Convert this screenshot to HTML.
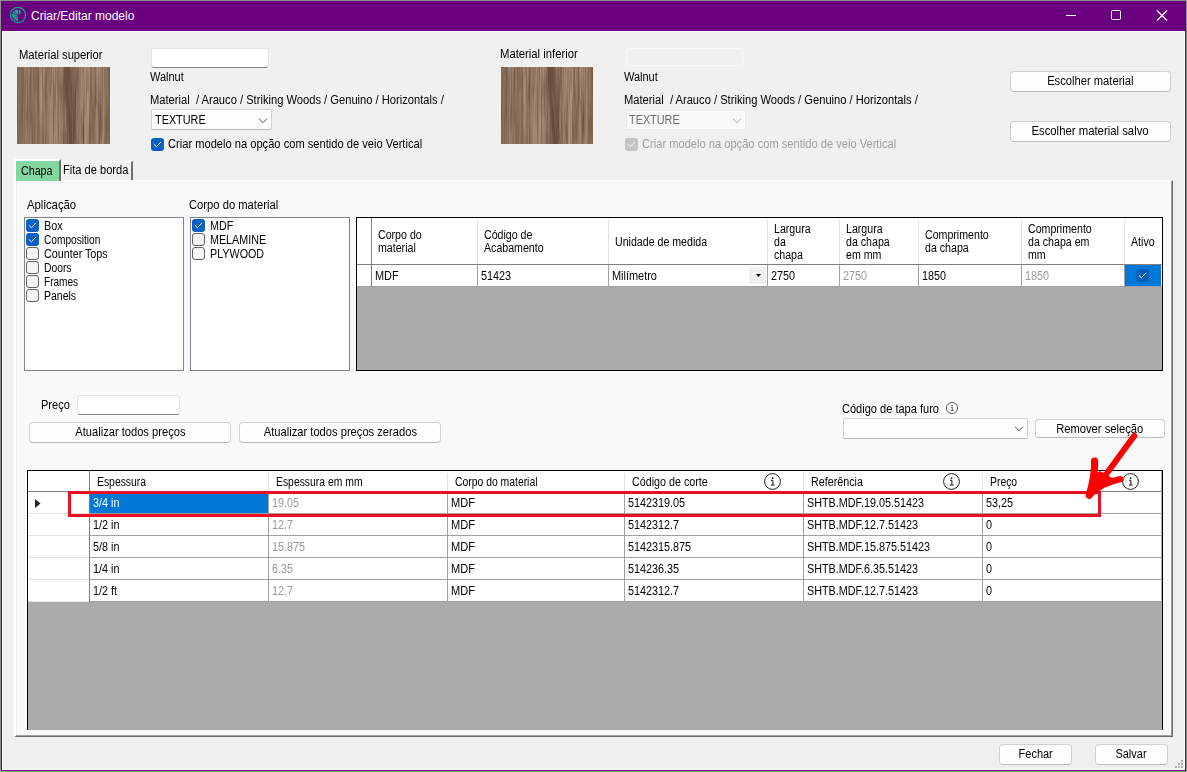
<!DOCTYPE html>
<html><head><meta charset="utf-8"><title>Criar/Editar modelo</title>
<style>
*{box-sizing:border-box;margin:0;padding:0}
html,body{width:1187px;height:772px;overflow:hidden;background:#8d908d}
body{font-family:"Liberation Sans",sans-serif;font-size:12px;color:#000;position:relative;line-height:13px}
.a{position:absolute;white-space:pre}
.t{position:absolute;white-space:pre;transform-origin:0 0;font-size:12px;line-height:13px}
.ts{display:inline-block;white-space:pre;transform-origin:50% 50%}
#win{position:absolute;left:1px;top:1px;width:1185px;height:770px;background:#6a0080}
#client{position:absolute;left:2px;top:31px;width:1183px;height:739px;background:#f0f0f0;border:1px solid #fcfcfc}
#title{position:absolute;left:30px;top:8px;color:#fff;font-size:12px;line-height:14px;white-space:pre}
.btn{position:absolute;background:#fdfdfd;border:1px solid #d0d0d0;border-bottom-color:#bcbcbc;border-radius:4px;text-align:center;white-space:pre}
.inp{position:absolute;background:#fff;border:1px solid #e3e3e3;border-bottom:1px solid #868686;border-radius:3px}
.cmb{position:absolute;background:#fdfdfd;border:1px solid #d2d2d2;border-bottom-color:#b8b8b8;border-radius:2px}
.cb{position:absolute;width:13px;height:13px;border-radius:3px}
.cb.on{background:#0a5fc2}
.cb.off{background:#f4f4f4;border:1px solid #626262}
.cb.dis{background:#c4c4c4}
.cb svg{position:absolute;left:0;top:0}
.wood{position:absolute;width:93px;height:77px}
.lb{position:absolute;background:#fff;border:1px solid #7f848c}
.grid{position:absolute;background:#ababab;border:1px solid #000;overflow:hidden}
</style></head><body>
<div id="win">
 <svg class="a" style="left:8px;top:5px" width="19" height="19" viewBox="0 0 19 19"><g transform="translate(0.5,0.5)"><circle cx="8.5" cy="8.5" r="7.6" fill="none" stroke="#16a890" stroke-width="1.25"/><path d="M8.5 9 L8.3 3 A6 6 0 0 0 3.2 11.5 Z M8.5 9 L3.6 12 A6 6 0 0 0 8.6 14.6 Z M9.3 8.3 L9.3 3.2 L11.5 4.2 L11 5.6 L12.3 6.6 L10.6 7 Z" fill="#12b090"/><path d="M8.5 9 L3 6.8 M8.5 9 L4 4.2 M8.5 9 L5.6 13.8" stroke="#6a0080" stroke-width="0.6"/></g></svg>
 <div id="title">Criar/Editar modelo</div>
 <svg class="a" style="left:1064px;top:9px" width="110" height="14" viewBox="0 0 110 14"><path d="M1 5.5H11" stroke="#fff" stroke-width="1" fill="none"/><rect x="46.5" y="0.5" width="9" height="9" rx="1" fill="none" stroke="#fff" stroke-width="1"/><path d="M92 0.5L102 10.5M102 0.5L92 10.5" stroke="#fff" stroke-width="1.2" fill="none"/></svg>
</div>
<div id="client"></div>
<div id="ui" class="a" style="left:0;top:0;width:1187px;height:772px">
<svg width="0" height="0" style="position:absolute"><defs>
<linearGradient id="wg" x1="0" x2="1" y1="0" y2="0"><stop offset="0" stop-color="#8e7461"/><stop offset="0.04" stop-color="#846b59"/><stop offset="0.09" stop-color="#9b816c"/><stop offset="0.14" stop-color="#a88f78"/><stop offset="0.18" stop-color="#8c7360"/><stop offset="0.23" stop-color="#917864"/><stop offset="0.27" stop-color="#ac937b"/><stop offset="0.31" stop-color="#947b67"/><stop offset="0.36" stop-color="#9e8570"/><stop offset="0.42" stop-color="#a78e77"/><stop offset="0.49" stop-color="#a08771"/><stop offset="0.53" stop-color="#705747"/><stop offset="0.57" stop-color="#765d4c"/><stop offset="0.62" stop-color="#8f7663"/><stop offset="0.68" stop-color="#99806c"/><stop offset="0.74" stop-color="#b1987f"/><stop offset="0.8" stop-color="#a48b74"/><stop offset="0.84" stop-color="#947b68"/><stop offset="0.88" stop-color="#ac937b"/><stop offset="0.93" stop-color="#9e8570"/><stop offset="0.97" stop-color="#866d5b"/><stop offset="1" stop-color="#8c7361"/></linearGradient>
<filter id="gr1" x="0" y="0" width="100%" height="100%" color-interpolation-filters="sRGB"><feTurbulence type="fractalNoise" baseFrequency="0.45 0.008" numOctaves="3" seed="11"/><feColorMatrix type="matrix" values="0 0 0 0 0.31  0 0 0 0 0.22  0 0 0 0 0.15  1.15 0 0 0 -0.44"/></filter>
<filter id="gr2" x="0" y="0" width="100%" height="100%" color-interpolation-filters="sRGB"><feTurbulence type="fractalNoise" baseFrequency="0.38 0.007" numOctaves="2" seed="4"/><feColorMatrix type="matrix" values="0 0 0 0 0.80  0 0 0 0 0.68  0 0 0 0 0.54  0.95 0 0 0 -0.43"/></filter>
<filter id="gr3" x="0" y="0" width="100%" height="100%" color-interpolation-filters="sRGB"><feTurbulence type="fractalNoise" baseFrequency="0.6 0.025" numOctaves="2" seed="23"/><feColorMatrix type="matrix" values="0 0 0 0 0.27  0 0 0 0 0.19  0 0 0 0 0.12  1.0 0 0 0 -0.47"/></filter>
<symbol id="wood" viewBox="0 0 93 77" preserveAspectRatio="none"><rect width="93" height="77" fill="url(#wg)"/>
<rect width="93" height="77" filter="url(#gr2)"/>
<rect width="93" height="77" filter="url(#gr1)"/><rect width="93" height="77" filter="url(#gr3)"/>
<path d="M48 0 C49 20 51 40 54 77" stroke="#5a402d" stroke-width="3" fill="none" opacity=".42"/>
<path d="M52 0 C53 25 57 50 60 77" stroke="#654a35" stroke-width="1.3" fill="none" opacity=".4"/>
<path d="M76 77 C75 55 76 40 79 31 C82 40 83 55 82 77" stroke="#765a43" stroke-width="1.1" fill="none" opacity=".6"/>
</symbol>
<symbol id="chk" viewBox="0 0 13 13"><path d="M3.1 6.5L5.3 8.7L9.8 4.2" stroke="#fff" stroke-width="0.95" fill="none" stroke-linecap="round" stroke-linejoin="round"/></symbol>
<symbol id="chev" viewBox="0 0 10 6"><path d="M1.3 1L5 4.7L8.7 1" stroke="#555" stroke-width="1" fill="none" stroke-linecap="round" stroke-linejoin="round"/></symbol>
<symbol id="info" viewBox="0 0 17 17"><circle cx="8.5" cy="8.5" r="7.9" fill="#fff" stroke="#1c1c1c" stroke-width="1"/><path d="M7 7.3H8.9V11.9M6.8 12H10.6" stroke="#111" stroke-width="1" fill="none"/><circle cx="8.6" cy="5.2" r="0.85" fill="#111"/></symbol>
</defs></svg>
<div class="t" style="left:19px;top:49px;transform:scaleX(0.935)">Material superior</div>
<svg class="wood" style="left:17px;top:67px"><use href="#wood"/></svg>
<div class="inp" style="left:151px;top:48px;width:118px;height:20px"></div>
<div class="t" style="left:150px;top:71px;transform:scaleX(0.915)">Walnut</div>
<div class="t" style="left:150px;top:94px;transform:scaleX(0.93)">Material  / Arauco / Striking Woods / Genuino / Horizontals /</div>
<div class="cmb" style="left:151px;top:109px;width:121px;height:21px"><svg class="a" style="left:106px;top:8px" width="10" height="6"><use href="#chev"/></svg></div>
<div class="t" style="left:155px;top:114px;transform:scaleX(0.905)">TEXTURE</div>
<div class="cb on" style="left:151px;top:138px"><svg width="13" height="13"><use href="#chk"/></svg></div>
<div class="t" style="left:168px;top:138px;transform:scaleX(0.927)">Criar modelo na opção com sentido de veio Vertical</div>
<div class="t" style="left:500px;top:48px;transform:scaleX(0.94)">Material inferior</div>
<svg class="wood" style="left:501px;top:67px;width:92px"><use href="#wood"/></svg>
<div class="a" style="left:626px;top:48px;width:117px;height:18px;border:1px solid #f8f8f8;background:#f0f0f0;border-radius:3px"></div>
<div class="t" style="left:624px;top:71px;transform:scaleX(0.915)">Walnut</div>
<div class="t" style="left:624px;top:94px;transform:scaleX(0.93)">Material  / Arauco / Striking Woods / Genuino / Horizontals /</div>
<div class="cmb" style="left:626px;top:110px;width:120px;height:20px;background:#f8f8f8;border-color:#eaeaea"><svg class="a" style="left:105px;top:7px;opacity:.5" width="10" height="6"><use href="#chev"/></svg></div>
<div class="t" style="left:629px;top:114px;transform:scaleX(0.905);color:#6d6d6d">TEXTURE</div>
<div class="cb dis" style="left:625px;top:138px"><svg width="13" height="13"><use href="#chk"/></svg></div>
<div class="t" style="left:642px;top:138px;transform:scaleX(0.927);color:#a0a0a0">Criar modelo na opção com sentido de veio Vertical</div>
<div class="btn" style="left:1010px;top:71px;width:161px;height:21px;line-height:18px"><span class="ts" style="transform:scaleX(0.932)">Escolher material</span></div>
<div class="btn" style="left:1010px;top:121px;width:161px;height:21px;line-height:18px"><span class="ts" style="transform:scaleX(0.945)">Escolher material salvo</span></div>
<div class="a" style="left:14px;top:180px;width:1159px;height:557px;background:#f9f9f9;border-left:2px solid #fff;border-top:1px solid #fff;border-right:1px solid #696969;border-bottom:1px solid #696969"></div>
<div class="a" style="left:16px;top:181px;width:1px;height:554px;background:#ececec"></div>
<div class="a" style="left:1171px;top:181px;width:1px;height:555px;background:#a0a0a0"></div>
<div class="a" style="left:16px;top:735px;width:1156px;height:1px;background:#a0a0a0"></div>
<div class="a" style="left:14px;top:159px;width:47px;height:22px;background:#84d7a0;border-left:2px solid #fff;border-top:2px solid #fff;border-right:2px solid #6e6e6e"></div>
<div class="t" style="left:21px;top:165px;transform:scaleX(0.89)">Chapa</div>
<div class="a" style="left:61px;top:161px;width:72px;height:19px;background:#f0f0f0;border-top:1px solid #fff;border-right:2px solid #6e6e6e"></div>
<div class="t" style="left:63px;top:164px;transform:scaleX(0.925)">Fita de borda</div>
<div class="t" style="left:27px;top:199px;transform:scaleX(0.945)">Aplicação</div>
<div class="t" style="left:188.5px;top:199px;transform:scaleX(0.935)">Corpo do material</div>
<div class="lb" style="left:24px;top:217px;width:160px;height:154px"></div>
<div class="cb on" style="left:26px;top:219px"><svg width="13" height="13"><use href="#chk"/></svg></div>
<div class="t" style="left:43.6px;top:220px;transform:scaleX(0.9)">Box</div>
<div class="cb on" style="left:26px;top:233px"><svg width="13" height="13"><use href="#chk"/></svg></div>
<div class="t" style="left:43.6px;top:234px;transform:scaleX(0.845)">Composition</div>
<div class="cb off" style="left:26px;top:247px"></div>
<div class="t" style="left:43.6px;top:248px;transform:scaleX(0.895)">Counter Tops</div>
<div class="cb off" style="left:26px;top:261px"></div>
<div class="t" style="left:43.6px;top:262px;transform:scaleX(0.86)">Doors</div>
<div class="cb off" style="left:26px;top:275px"></div>
<div class="t" style="left:43.6px;top:276px;transform:scaleX(0.84)">Frames</div>
<div class="cb off" style="left:26px;top:289px"></div>
<div class="t" style="left:43.6px;top:290px;transform:scaleX(0.875)">Panels</div>
<div class="lb" style="left:190px;top:217px;width:160px;height:154px"></div>
<div class="cb on" style="left:192px;top:219px"><svg width="13" height="13"><use href="#chk"/></svg></div>
<div class="t" style="left:210px;top:220px;transform:scaleX(0.895)">MDF</div>
<div class="cb off" style="left:192px;top:233px"></div>
<div class="t" style="left:210px;top:234px;transform:scaleX(0.895)">MELAMINE</div>
<div class="cb off" style="left:192px;top:247px"></div>
<div class="t" style="left:210px;top:248px;transform:scaleX(0.895)">PLYWOOD</div>
<div class="grid" style="left:356px;top:217px;width:807px;height:154px">
<div class="a" style="left:0;top:0;width:805px;height:47px;background:#fff;border-bottom:1px solid #808080"></div>
<div class="a" style="left:0;top:47px;width:805px;height:22px;background:#fff;border-bottom:1px solid #a0a0a0"></div>
<div class="a" style="left:14px;top:0px;width:1px;height:46px;background:#808080"></div>
<div class="a" style="left:14px;top:47px;width:1px;height:22px;background:#808080"></div>
<div class="t" style="left:21.3px;top:11px;transform:scaleX(0.885)">Corpo do</div>
<div class="t" style="left:21.3px;top:24px;transform:scaleX(0.885)">material</div>
<div class="a" style="left:120px;top:2px;width:1px;height:44px;background:#e2e2e2"></div>
<div class="a" style="left:120px;top:47px;width:1px;height:22px;background:#a0a0a0"></div>
<div class="t" style="left:18px;top:52px;transform:scaleX(0.91)">MDF</div>
<div class="t" style="left:127.3px;top:11px;transform:scaleX(0.885)">Código de</div>
<div class="t" style="left:127.3px;top:24px;transform:scaleX(0.885)">Acabamento</div>
<div class="a" style="left:251px;top:2px;width:1px;height:44px;background:#e2e2e2"></div>
<div class="a" style="left:251px;top:47px;width:1px;height:22px;background:#a0a0a0"></div>
<div class="t" style="left:124px;top:52px;transform:scaleX(0.9)">51423</div>
<div class="t" style="left:258.3px;top:18px;transform:scaleX(0.885)">Unidade de medida</div>
<div class="a" style="left:410px;top:2px;width:1px;height:44px;background:#e2e2e2"></div>
<div class="a" style="left:410px;top:47px;width:1px;height:22px;background:#a0a0a0"></div>
<div class="t" style="left:255px;top:52px;transform:scaleX(0.91)">Milímetro</div>
<div class="t" style="left:417.3px;top:5px;transform:scaleX(0.885)">Largura</div>
<div class="t" style="left:417.3px;top:18px;transform:scaleX(0.885)">da</div>
<div class="t" style="left:417.3px;top:31px;transform:scaleX(0.885)">chapa</div>
<div class="a" style="left:482px;top:2px;width:1px;height:44px;background:#e2e2e2"></div>
<div class="a" style="left:482px;top:47px;width:1px;height:22px;background:#a0a0a0"></div>
<div class="t" style="left:414px;top:52px;transform:scaleX(0.9)">2750</div>
<div class="t" style="left:489.3px;top:5px;transform:scaleX(0.885)">Largura</div>
<div class="t" style="left:489.3px;top:18px;transform:scaleX(0.885)">da chapa</div>
<div class="t" style="left:489.3px;top:31px;transform:scaleX(0.885)">em mm</div>
<div class="a" style="left:561px;top:2px;width:1px;height:44px;background:#e2e2e2"></div>
<div class="a" style="left:561px;top:47px;width:1px;height:22px;background:#a0a0a0"></div>
<div class="t" style="left:486px;top:52px;transform:scaleX(0.9);color:#9a9a9a">2750</div>
<div class="t" style="left:568.3px;top:11px;transform:scaleX(0.885)">Comprimento</div>
<div class="t" style="left:568.3px;top:24px;transform:scaleX(0.885)">da chapa</div>
<div class="a" style="left:664px;top:2px;width:1px;height:44px;background:#e2e2e2"></div>
<div class="a" style="left:664px;top:47px;width:1px;height:22px;background:#a0a0a0"></div>
<div class="t" style="left:565px;top:52px;transform:scaleX(0.9)">1850</div>
<div class="t" style="left:671.3px;top:5px;transform:scaleX(0.885)">Comprimento</div>
<div class="t" style="left:671.3px;top:18px;transform:scaleX(0.885)">da chapa em</div>
<div class="t" style="left:671.3px;top:31px;transform:scaleX(0.885)">mm</div>
<div class="a" style="left:767px;top:2px;width:1px;height:44px;background:#e2e2e2"></div>
<div class="a" style="left:767px;top:47px;width:1px;height:22px;background:#a0a0a0"></div>
<div class="t" style="left:668px;top:52px;transform:scaleX(0.9);color:#9a9a9a">1850</div>
<div class="t" style="left:774.3px;top:18px;transform:scaleX(0.885)">Ativo</div>
<div class="a" style="left:392px;top:49px;width:17px;height:17px;background:#f0f0f0"></div>
<svg class="a" style="left:399px;top:56px" width="5" height="3"><path d="M0 0H5L2.5 3Z" fill="#000"/></svg>
<div class="a" style="left:768px;top:47px;width:36px;height:21px;background:#0078d7"></div>
<div class="cb" style="left:779px;top:51px;background:#005fb8"><svg width="13" height="13"><use href="#chk"/></svg></div>
</div>
<div class="t" style="left:41px;top:399px;transform:scaleX(0.918)">Preço</div>
<div class="inp" style="left:77px;top:395px;width:103px;height:20px"></div>
<div class="btn" style="left:29px;top:422px;width:202px;height:21px;line-height:18px"><span class="ts" style="transform:scaleX(0.928)">Atualizar todos preços</span></div>
<div class="btn" style="left:239px;top:422px;width:202px;height:21px;line-height:18px"><span class="ts" style="transform:scaleX(0.93)">Atualizar todos preços zerados</span></div>
<div class="t" style="left:842px;top:403px;transform:scaleX(0.92)">Código de tapa furo</div>
<svg class="a" style="left:946px;top:402px" width="12" height="12"><use href="#info"/></svg>
<div class="cmb" style="left:843px;top:418px;width:185px;height:21px"><svg class="a" style="left:170px;top:7px" width="10" height="6"><use href="#chev"/></svg></div>
<div class="btn" style="left:1035px;top:419px;width:130px;height:19px;line-height:18px"><span class="ts" style="transform:scaleX(0.932)">Remover seleção</span></div>
<div class="grid" style="left:27px;top:470px;width:1136px;height:260px;border-bottom:none">
<div class="a" style="left:0;top:0;width:1133px;height:21px;background:#fff;border-bottom:1px solid #808080"></div>
<div class="a" style="left:0;top:21px;width:1133px;height:22px;background:#fff;border-bottom:1px solid #a0a0a0"></div>
<div class="a" style="left:0;top:42px;width:61px;height:1px;background:#e2e2e2"></div>
<div class="a" style="left:0;top:43px;width:1133px;height:22px;background:#fff;border-bottom:1px solid #a0a0a0"></div>
<div class="a" style="left:0;top:64px;width:61px;height:1px;background:#e2e2e2"></div>
<div class="a" style="left:0;top:65px;width:1133px;height:22px;background:#fff;border-bottom:1px solid #a0a0a0"></div>
<div class="a" style="left:0;top:86px;width:61px;height:1px;background:#e2e2e2"></div>
<div class="a" style="left:0;top:87px;width:1133px;height:22px;background:#fff;border-bottom:1px solid #a0a0a0"></div>
<div class="a" style="left:0;top:108px;width:61px;height:1px;background:#e2e2e2"></div>
<div class="a" style="left:0;top:109px;width:1133px;height:22px;background:#fff;border-bottom:1px solid #a0a0a0"></div>
<div class="a" style="left:0;top:130px;width:61px;height:1px;background:#e2e2e2"></div>
<div class="a" style="left:61px;top:0px;width:1px;height:20px;background:#808080"></div>
<div class="a" style="left:61px;top:21px;width:1px;height:110px;background:#808080"></div>
<div class="a" style="left:240px;top:2px;width:1px;height:18px;background:#e2e2e2"></div>
<div class="a" style="left:240px;top:21px;width:1px;height:110px;background:#a0a0a0"></div>
<div class="a" style="left:419px;top:2px;width:1px;height:18px;background:#e2e2e2"></div>
<div class="a" style="left:419px;top:21px;width:1px;height:110px;background:#a0a0a0"></div>
<div class="a" style="left:596px;top:2px;width:1px;height:18px;background:#e2e2e2"></div>
<div class="a" style="left:596px;top:21px;width:1px;height:110px;background:#a0a0a0"></div>
<div class="a" style="left:775px;top:2px;width:1px;height:18px;background:#e2e2e2"></div>
<div class="a" style="left:775px;top:21px;width:1px;height:110px;background:#a0a0a0"></div>
<div class="a" style="left:954px;top:2px;width:1px;height:18px;background:#e2e2e2"></div>
<div class="a" style="left:954px;top:21px;width:1px;height:110px;background:#a0a0a0"></div>
<div class="t" style="left:68.5px;top:5px;transform:scaleX(0.865)">Espessura</div>
<div class="t" style="left:247.5px;top:5px;transform:scaleX(0.865)">Espessura em mm</div>
<div class="t" style="left:426.5px;top:5px;transform:scaleX(0.865)">Corpo do material</div>
<div class="t" style="left:603.5px;top:5px;transform:scaleX(0.895)">Código de corte</div>
<div class="t" style="left:782.5px;top:5px;transform:scaleX(0.895)">Referência</div>
<div class="t" style="left:961.5px;top:5px;transform:scaleX(0.865)">Preço</div>
<div class="a" style="left:62px;top:21px;width:178px;height:21px;background:#0078d7"></div>
<div class="t" style="left:65px;top:26px;transform:scaleX(0.9);color:#fff">3/4 in</div>
<div class="t" style="left:244px;top:26px;transform:scaleX(0.9);color:#9a9a9a">19.05</div>
<div class="t" style="left:423px;top:26px;transform:scaleX(0.92)">MDF</div>
<div class="t" style="left:600px;top:26px;transform:scaleX(0.9)">5142319.05</div>
<div class="t" style="left:779px;top:26px;transform:scaleX(0.9)">SHTB.MDF.19.05.51423</div>
<div class="t" style="left:958px;top:26px;transform:scaleX(0.9)">53,25</div>
<div class="t" style="left:65px;top:48px;transform:scaleX(0.9)">1/2 in</div>
<div class="t" style="left:244px;top:48px;transform:scaleX(0.9);color:#9a9a9a">12.7</div>
<div class="t" style="left:423px;top:48px;transform:scaleX(0.92)">MDF</div>
<div class="t" style="left:600px;top:48px;transform:scaleX(0.9)">5142312.7</div>
<div class="t" style="left:779px;top:48px;transform:scaleX(0.9)">SHTB.MDF.12.7.51423</div>
<div class="t" style="left:958px;top:48px;transform:scaleX(0.9)">0</div>
<div class="t" style="left:65px;top:70px;transform:scaleX(0.9)">5/8 in</div>
<div class="t" style="left:244px;top:70px;transform:scaleX(0.9);color:#9a9a9a">15.875</div>
<div class="t" style="left:423px;top:70px;transform:scaleX(0.92)">MDF</div>
<div class="t" style="left:600px;top:70px;transform:scaleX(0.9)">5142315.875</div>
<div class="t" style="left:779px;top:70px;transform:scaleX(0.9)">SHTB.MDF.15.875.51423</div>
<div class="t" style="left:958px;top:70px;transform:scaleX(0.9)">0</div>
<div class="t" style="left:65px;top:92px;transform:scaleX(0.9)">1/4 in</div>
<div class="t" style="left:244px;top:92px;transform:scaleX(0.9);color:#9a9a9a">6.35</div>
<div class="t" style="left:423px;top:92px;transform:scaleX(0.92)">MDF</div>
<div class="t" style="left:600px;top:92px;transform:scaleX(0.9)">514236.35</div>
<div class="t" style="left:779px;top:92px;transform:scaleX(0.9)">SHTB.MDF.6.35.51423</div>
<div class="t" style="left:958px;top:92px;transform:scaleX(0.9)">0</div>
<div class="t" style="left:65px;top:114px;transform:scaleX(0.9)">1/2 ft</div>
<div class="t" style="left:244px;top:114px;transform:scaleX(0.9);color:#9a9a9a">12.7</div>
<div class="t" style="left:423px;top:114px;transform:scaleX(0.92)">MDF</div>
<div class="t" style="left:600px;top:114px;transform:scaleX(0.9)">5142312.7</div>
<div class="t" style="left:779px;top:114px;transform:scaleX(0.9)">SHTB.MDF.12.7.51423</div>
<div class="t" style="left:958px;top:114px;transform:scaleX(0.9)">0</div>
<svg class="a" style="left:7px;top:28px" width="6" height="10"><path d="M0 0L5.5 4.5L0 9Z" fill="#222"/></svg>
<svg class="a" style="left:736px;top:2px" width="17" height="17"><use href="#info"/></svg>
<svg class="a" style="left:915px;top:2px" width="17" height="17"><use href="#info"/></svg>
<svg class="a" style="left:1094px;top:2px" width="17" height="17"><use href="#info"/></svg>
</div>
<div class="a" style="left:68px;top:491px;width:1033px;height:26px;border:3px solid #e81123"></div>
<svg class="a" style="left:1060px;top:420px" width="120" height="100" viewBox="0 0 120 100"><g stroke="#ff0000" fill="none" stroke-linecap="round" stroke-linejoin="round"><path d="M74.3 15.8L39 64" stroke-width="6"/><path d="M29.3 75.2C32.5 64 35.2 52 34.6 41.2" stroke-width="7.2"/><path d="M29.3 75.2C37 67.5 48 61.5 60.3 59.2" stroke-width="6.4"/></g><path d="M29 76L33 55L40 51L52 58Z" fill="#ff0000"/></svg>
<div class="btn" style="left:999px;top:744px;width:73px;height:21px;line-height:18px"><span class="ts" style="transform:scaleX(0.915)">Fechar</span></div>
<div class="btn" style="left:1095px;top:744px;width:73px;height:21px;line-height:18px"><span class="ts" style="transform:scaleX(0.917)">Salvar</span></div>
<svg class="a" style="left:1175px;top:760px" width="9" height="9"><rect x="6" y="0" width="2" height="2" fill="#b0b0b0"/><rect x="3" y="3" width="2" height="2" fill="#b0b0b0"/><rect x="6" y="3" width="2" height="2" fill="#b0b0b0"/><rect x="0" y="6" width="2" height="2" fill="#b0b0b0"/><rect x="3" y="6" width="2" height="2" fill="#b0b0b0"/><rect x="6" y="6" width="2" height="2" fill="#b0b0b0"/></svg>
</div>
</body></html>
